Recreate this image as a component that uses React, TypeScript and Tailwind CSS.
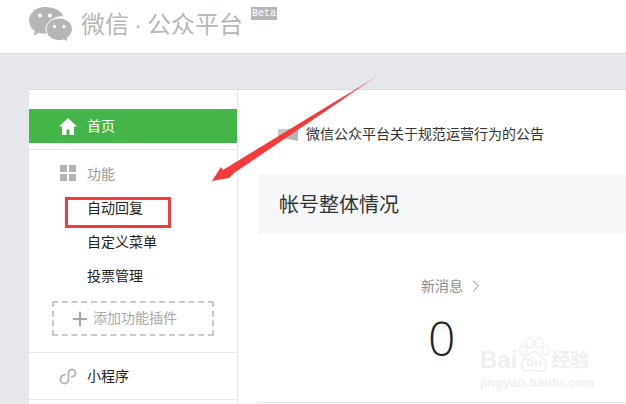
import { Plus, ChevronRight } from "lucide-react";

const sans = "font-['Liberation_Sans','Noto_Sans_CJK_SC',sans-serif]";

function WechatLogo() {
    return (
        <svg width="44" height="36" viewBox="0 0 44 36" className="shrink-0">
            <path d="M16 0C7 0 0 6 0 13.500c0 4.300 2.300 8 6 10.500l-1.500 4.700 5.500-3c2 .6 4 .9 6 .9 1 0 1.600 0 2.500-.2-.4-1.300-.6-2.600-.6-3.900 0-7.500 6.600-13.200 14.900-13.200h1.400C32.500 3.800 25 0 16 0z" fill="#b4b6b6" />
            <path d="M43.500 22.300c0-6.300-6.200-11.300-13.200-11.300-7.500 0-13.300 5-13.300 11.300 0 6.300 5.800 11.300 13.300 11.300 1.600 0 3.100-.3 4.600-.8l4.300 2.400-1.200-4c3.300-2.300 5.500-5.300 5.500-8.900z" fill="#b4b6b6" stroke="#fff" strokeWidth="1" />
            <circle cx="11" cy="8.500" r="2" fill="#fff" />
            <circle cx="21" cy="8.500" r="2" fill="#fff" />
            <circle cx="25.500" cy="19.500" r="1.700" fill="#fff" />
            <circle cx="35" cy="19.500" r="1.700" fill="#fff" />
        </svg>
    );
}

function Header() {
    return (
        <header className="h-[54px] shrink-0 bg-white border-b border-[#d9dadc] flex items-start pl-[29px] pt-[7px]">
            <WechatLogo />
            <span className="ml-[8px] mt-[3px] text-[24px] leading-[30px] text-[#b4b6b6] whitespace-nowrap">
                微信<span className="mx-[5px]">·</span>公众平台
            </span>
            <span className="ml-[8px] bg-[#b4b6b6] text-white text-[10px] leading-[13px] px-[1px] font-['Liberation_Mono',monospace]">Beta</span>
        </header>
    );
}

function Sidebar() {
    return (
        <aside className="w-[209px] shrink-0 border-r border-[#e7e7eb] pt-[19px]">
            <div className="h-[34px] bg-[#44b549] flex items-center pl-[30px] text-white text-[14px]">
                <svg width="18" height="17" viewBox="0 0 18 17" fill="#fff" className="shrink-0">
                    <path d="M9 0L0 8.500h3V17h4.500v-5.500h3V17H15V8.500h3z" />
                </svg>
                <span className="ml-[10px] mt-[1px]">首页</span>
            </div>
            <div className="mt-[6px] border-t border-[#e7e7eb] h-[203px] pt-[14px]">
                <div className="flex items-center h-[20px] pl-[31px] text-[14px] text-[#9a9a9a]">
                    <div className="grid grid-cols-2 gap-[2px] shrink-0 mb-[2px]">
                        <i className="w-[7px] h-[7px] bg-[#b2b2b2]" />
                        <i className="w-[7px] h-[7px] bg-[#b2b2b2]" />
                        <i className="w-[7px] h-[7px] bg-[#b2b2b2]" />
                        <i className="w-[7px] h-[7px] bg-[#b2b2b2]" />
                    </div>
                    <span className="ml-[11px]">功能</span>
                </div>
                <div className="pl-[58px] mt-[14px] flex flex-col gap-[14px] text-[14px] leading-[20px] text-[#222]">
                    <span>自动回复</span>
                    <span>自定义菜单</span>
                    <span>投票管理</span>
                </div>
                <div className="ml-[23px] mt-[15px] w-[162px] h-[35px] border-2 border-dashed border-[#c9c9c9] flex items-center pl-[15px] text-[14px] text-[#a8a8a8]">
                    <Plus size={22} strokeWidth={2.200} className="shrink-0" />
                    <span className="ml-[2px]">添加功能插件</span>
                </div>
            </div>
            <div className="border-t border-[#e7e7eb] h-[47px] flex items-center pl-[30px] text-[14px] text-[#222]">
                <svg width="19" height="19" viewBox="0 0 19 19" fill="none" stroke="#b8b8b8" strokeWidth="2" strokeLinecap="round" className="shrink-0">
                    <path d="M6 7.500C3.500 8 1.500 10 1.500 12.500a4 4 0 0 0 8 0V6a3.500 3.500 0 0 1 7 0c0 2-1.500 3.500-3.500 3.800" />
                </svg>
                <span className="ml-[9px]">小程序</span>
            </div>
            <div className="border-t border-[#e7e7eb] h-[10px]" />
        </aside>
    );
}

function Main() {
    return (
        <main className="flex-1 min-w-0 pl-[20px]">
            <div className="flex items-center h-[20px] mt-[34px] pl-[20px]">
                <svg width="20" height="14" viewBox="0 0 20 14" className="shrink-0">
                    <path d="M0 2h10v10H0z" fill="#c6c6c6" />
                    <path d="M10 2l10-2v14l-10-2z" fill="#b4b4b4" />
                </svg>
                <span className="ml-[8px] text-[14px] text-[#333] whitespace-nowrap">微信公众平台关于规范运营行为的公告</span>
            </div>
            <div className="mt-[30px] h-[60px] bg-[#f6f7f9] flex items-center pl-[21px] pt-[1px] text-[20px] text-[#333]">帐号整体情况</div>
            <div className="mt-[42px] pl-[163px]">
                <div className="flex items-center text-[14px] leading-[20px] text-[#8d8d8d]">
                    <span>新消息</span>
                    <ChevronRight size={20} strokeWidth={1.200} className="ml-[3px]" />
                </div>
                <div className="mt-[14px] pl-[7px] text-[48px] leading-[56px] font-light text-[#222] font-['Open_Sans',sans-serif]">0</div>
            </div>
            <div className="mt-[36px] border-t border-[#e7e7eb]" />
        </main>
    );
}

function Watermark() {
    return (
        <div className="absolute left-[480px] top-[337px] w-[114px] text-[#efefef] font-['Liberation_Sans','Noto_Sans_CJK_SC',sans-serif]">
            <div className="flex items-end h-[36px]">
                <span className="text-[24px] leading-[26px] font-bold">Bai</span>
                <div className="relative w-[34px] h-[36px] shrink-0">
                    <svg width="34" height="36" viewBox="0 0 34 37" fill="none" stroke="#efefef" strokeWidth="1.500">
                        <ellipse cx="6" cy="14" rx="3.500" ry="5" />
                        <ellipse cx="13" cy="6" rx="4" ry="5" />
                        <ellipse cx="22" cy="6" rx="4" ry="5" />
                        <ellipse cx="29" cy="14" rx="3.500" ry="5" />
                        <path d="M17 15c-5 0-6 5-10 8-4 3-4 12 3 12 3 0 5-1 7-1s4 1 7 1c7 0 7-9 3-12-4-3-5-8-10-8z" />
                    </svg>
                    <span className="absolute left-[9px] bottom-[3px] text-[13px] leading-[16px] font-bold">du</span>
                </div>
                <span className="text-[19px] leading-[25px] font-bold whitespace-nowrap">经验</span>
            </div>
            <div className="text-[13px] leading-[14px] font-bold mt-[3px] whitespace-nowrap">jingyan.baidu.com</div>
        </div>
    );
}

export default function App() {
    return (
        <div className={`relative w-[626px] h-[404px] overflow-hidden bg-[#e6e7eb] flex flex-col ${sans}`}>
            <Header />
            <div className="mt-[35px] ml-[29px] flex-1 min-h-0 bg-white border-t border-[#d9dadc] flex">
                <Sidebar />
                <Main />
            </div>

            {/* red annotations on top of the screenshot */}
            <div className="absolute left-[65px] top-[197px] w-[106px] h-[31px] border-[3px] border-[#f43a3a]" />
            <svg className="absolute left-0 top-0" width="626" height="404" viewBox="0 0 626 404">
                <defs>
                    <linearGradient id="fade" x1="382" y1="73" x2="300" y2="130" gradientUnits="userSpaceOnUse">
                        <stop offset="0" stopColor="#f43a3a" stopOpacity="0.2" />
                        <stop offset="0.5" stopColor="#f43a3a" />
                    </linearGradient>
                </defs>
                <path d="M382 73L234 173L229 178L212 181L221 167L223 170Z" fill="url(#fade)" />
            </svg>

            <Watermark />
        </div>
    );
}
